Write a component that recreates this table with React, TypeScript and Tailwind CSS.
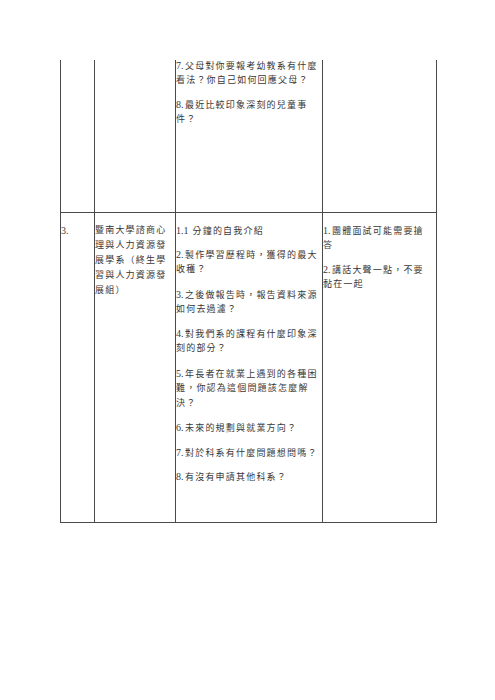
import React from "react";

const font = { fontFamily: '"Liberation Serif", "Noto Sans CJK TC", serif' };

function Line({ text }: { text: string }) {
  const m = text.match(/^([0-9.]+ ?)(.*)$/);
  if (!m) return <>{text}</>;
  return (
    <>
      <span className="text-[10px] tracking-normal mr-[1.5px]">{m[1]}</span>
      {m[2]}
    </>
  );
}

function Para({ lines }: { lines: string[] }) {
  return (
    <div className="flex flex-col">
      {lines.map((l, i) => (
        <div key={i} className="whitespace-nowrap leading-[15px] h-[15px]">
          {i === 0 ? <Line text={l} /> : l}
        </div>
      ))}
    </div>
  );
}

function Cell({
  paras,
  className = "",
}: {
  paras: string[][];
  className?: string;
}) {
  return (
    <div className={"border-r border-b border-[#4a4a4a] overflow-visible " + className}>
      <div className="flex flex-col gap-[9.5px]">
        {paras.map((p, i) => (
          <Para key={i} lines={p} />
        ))}
      </div>
    </div>
  );
}

export default function App() {
  return (
    <div className="w-[495px] h-[700px] bg-white pt-[60px] pl-[60px]">
      <div
        className="grid grid-cols-[34px_81px_147px_114px] w-[377px] border-l border-[#4a4a4a] text-[9px] tracking-[1.2px] text-[#383838]"
        style={font}
      >
        {/* Row 1 (continued from previous page) */}
        <div className="h-[153px] border-r border-b border-[#4a4a4a]" />
        <div className="h-[153px] border-r border-b border-[#4a4a4a]" />
        <Cell
          className="h-[153px] [&>div]:-mt-[2.5px]"
          paras={[
            ["7.父母對你要報考幼教系有什麼", "看法？你自己如何回應父母？"],
            ["8.最近比較印象深刻的兒童事", "件？"],
          ]}
        />
        <div className="h-[153px] border-r border-b border-[#4a4a4a]" />

        {/* Row 2 */}
        <Cell className="h-[310px] pt-[9.5px]" paras={[["3."]]} />
        <Cell
          className="h-[310px] pt-[9.5px]"
          paras={[
            [
              "暨南大學諮商心",
              "理與人力資源發",
              "展學系（終生學",
              "習與人力資源發",
              "展組）",
            ],
          ]}
        />
        <Cell
          className="h-[310px] pt-[9.5px]"
          paras={[
            ["1.1 分鐘的自我介紹"],
            ["2.製作學習歷程時，獲得的最大", "收穫？"],
            ["3.之後做報告時，報告資料來源", "如何去過濾？"],
            ["4.對我們系的課程有什麼印象深", "刻的部分？"],
            [
              "5.年長者在就業上遇到的各種困",
              "難，你認為這個問題該怎麼解",
              "決？",
            ],
            ["6.未來的規劃與就業方向？"],
            ["7.對於科系有什麼問題想問嗎？"],
            ["8.有沒有申請其他科系？"],
          ]}
        />
        <Cell
          className="h-[310px] pt-[9.5px]"
          paras={[
            ["1.團體面試可能需要搶", "答"],
            ["2.講話大聲一點，不要", "黏在一起"],
          ]}
        />
      </div>
    </div>
  );
}
